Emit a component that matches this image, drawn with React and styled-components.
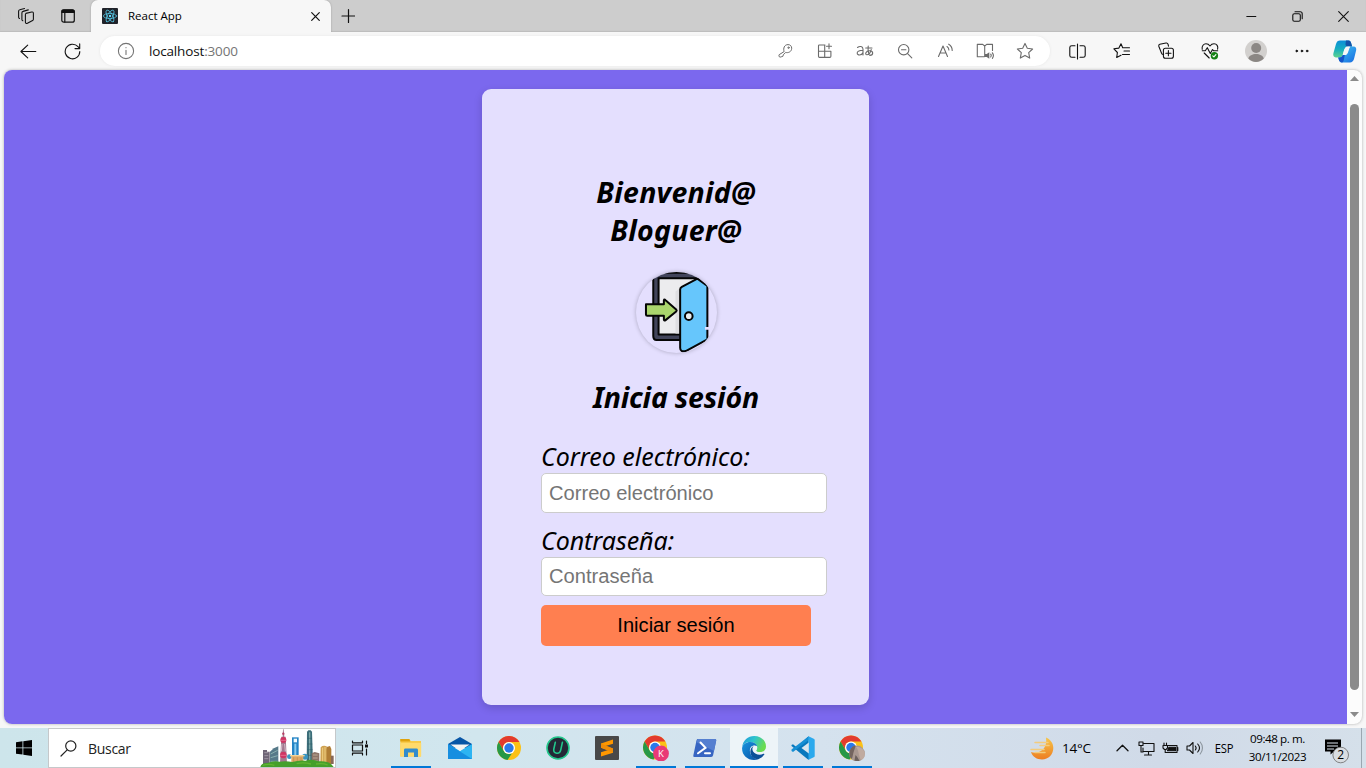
import React from "react";
import styled, { createGlobalStyle } from "styled-components";

const GlobalStyle = createGlobalStyle`
  * { box-sizing: border-box; }
  html, body { margin: 0; padding: 0; overflow: hidden; }
  body { font-family: "Open Sans", "Noto Sans", sans-serif; color: #000; }
  svg { display: block; flex: none; }
`;

const Desktop = styled.div`
  width: 1366px;
  height: 768px;
  display: flex;
  flex-direction: column;
  overflow: hidden;
  background: #f7f7f7;
`;

/* ---------- browser chrome ---------- */
const TitleBar = styled.header`
  height: 32px;
  display: flex;
  background: #cdcdcd;
  box-shadow: inset 0 -1px 1px #bdbdbd;
`;
const TitleTools = styled.div`
  width: 91px;
  display: flex;
  align-items: center;
  padding-left: 17px;
  gap: 25px;
`;
const Tab = styled.div`
  width: 240px;
  height: 32px;
  display: flex;
  align-items: center;
  padding: 0 9px 0 11px;
  background: #f7f7f7;
  border-radius: 7px 7px 0 0;
  box-shadow: 0 0 2px #999;
  clip-path: inset(0 -3px 0 -3px);
`;
const TabTitle = styled.span`
  flex: 1;
  margin-left: 10px;
  font-size: 11.5px;
  line-height: 16px;
`;
const NewTab = styled.div`
  width: 34px;
  display: flex;
  align-items: center;
  justify-content: center;
`;
const WindowButtons = styled.div`
  display: flex;
  margin-left: auto;
`;
const Cell = styled.div`
  width: ${(p) => p.$w}px;
  display: flex;
  align-items: center;
  justify-content: center;
`;
const Toolbar = styled.div`
  height: 38px;
  display: flex;
  background: #f7f7f7;
`;
const NavTools = styled.div`
  width: 100px;
  display: flex;
  padding-left: 6px;
`;
const AddressBar = styled.div`
  width: 950px;
  height: 30px;
  margin-top: 4px;
  display: flex;
  padding: 0 5px 0 17px;
  align-items: center;
  background: #fff;
  border-radius: 15px;
  box-shadow: 0 0 3px #e6e6e6;
`;
const Url = styled.span`
  flex: 1;
  margin-left: 14px;
  font-size: 13.5px;
  letter-spacing: -0.16px;
  color: #101010;
  span { color: #757575; }
`;
const BrowserActions = styled.div`
  display: flex;
  padding-left: 5px;
`;

/* ---------- page ---------- */
const Viewport = styled.main`
  height: 654px;
  margin: 0 4px 4px;
  display: flex;
  border-radius: 8px;
  overflow: hidden;
  background: #fcfcfc;
  box-shadow: 0 0 3px #aaa;
`;
const Page = styled.div`
  width: 1343px;
  padding-top: 19px;
  display: flex;
  justify-content: center;
  align-items: flex-start;
  background: #7b68ee;
`;
const LoginCard = styled.section`
  width: 387px;
  height: 616px;
  padding: 84px 58px 0 59px;
  background: #e4dffe;
  border-radius: 9px;
  box-shadow: 0 3px 9px rgba(0, 0, 0, 0.16);
`;
const Heading = styled.h1`
  margin: 0 0 ${(p) => p.$gap}px;
  font: italic 700 28.5px/38px "Noto Sans", sans-serif;
  letter-spacing: ${(p) => p.$track}px;
  text-align: center;
  white-space: nowrap;
`;
const Avatar = styled.div`
  width: 81px;
  height: 81px;
  margin: 0 auto 25px;
  border-radius: 50%;
  overflow: hidden;
  box-shadow: 0 0 4px rgba(0, 0, 0, 0.25);
`;
const Field = styled.label`
  display: block;
  margin-bottom: ${(p) => p.$gap}px;
`;
const FieldName = styled.span`
  display: block;
  height: 32px;
  font: italic 400 25px/31px "Noto Sans", sans-serif;
  letter-spacing: ${(p) => p.$track}px;
  white-space: nowrap;
`;
const Input = styled.input`
  display: block;
  width: 286px;
  height: ${(p) => p.$h}px;
  padding: 0 7px;
  border: 1px solid #ccc;
  border-radius: 5px;
  background: #fff;
  font: 20.15px "Liberation Sans", sans-serif;
  &::placeholder { color: #757575; opacity: 1; }
`;
const SubmitButton = styled.button`
  display: block;
  width: 270px;
  height: 41px;
  padding: 0;
  border: 0;
  border-radius: 5px;
  background: #ff7f50;
  color: #000;
  font: 20.1px "Liberation Sans", sans-serif;
`;
const Scrollbar = styled.div`
  width: 15px;
  display: flex;
  flex-direction: column;
  align-items: center;
  padding: 6px 0 7px;
  justify-content: space-between;
`;
const Thumb = styled.div`
  width: 9px;
  height: 586px;
  margin-bottom: -1px;
  border-radius: 5px;
  background: #8b8b8b;
`;

/* ---------- taskbar ---------- */
const Taskbar = styled.footer`
  height: 40px;
  display: flex;
  background: linear-gradient(90deg, #cde5eb 0, #d1e6ee 35%, #d5e2ee 60%, #d0dae8 85%, #d5e0ea 100%);
`;
const SearchBox = styled.div`
  width: 288px;
  display: flex;
  align-items: center;
  padding-left: 11px;
  border: 1px solid #c5c8ca;
  background: #fff;
  span { flex: 1; margin-left: 11px; font-size: 14px; letter-spacing: -0.3px; color: #222; }
`;
const Apps = styled.nav`
  display: flex;
  gap: 1px;
  margin-left: 3px;
`;
const AppButton = styled.div`
  width: 48px;
  height: 40px;
  display: flex;
  align-items: center;
  justify-content: center;
  background: ${(p) => (p.$active ? "#edf4f8" : "transparent")};
  background-image: ${(p) => (p.$open || p.$active ? "linear-gradient(#0078d7, #0078d7)" : "none")};
  background-repeat: no-repeat;
  background-position: center bottom;
  background-size: ${(p) => (p.$active ? "48px" : "40px")} 2px;
`;
const Tray = styled.div`
  display: flex;
  align-items: center;
  margin-left: auto;
`;
const Weather = styled.div`
  display: flex;
  align-items: center;
  gap: 8px;
  margin-right: 11px;
  span { width: 37px; font-size: 13.5px; letter-spacing: -0.2px; white-space: nowrap; }
`;
const Language = styled.span`
  width: 32px;
  margin-left: 1px;
  text-align: center;
  font-size: 12.2px;
  letter-spacing: -0.3px;
  transform: scaleX(0.92);
`;
const Clock = styled.div`
  width: 75px;
  text-align: center;
  font-size: 11.6px;
  line-height: 18px;
  letter-spacing: -0.42px;
  white-space: nowrap;
`;
const Notifications = styled.div`
  width: 46px;
  display: flex;
  padding: 7px 0 0 10px;
`;
const DesktopEdge = styled.div`
  width: 5px;
  height: 40px;
  border-left: 1px solid #9ba7b1;
`;

const Ico = ({ w = 20, h = w, c = "#111", sw = 1.1, children }) => (
  <svg width={w} height={h} viewBox={`0 0 ${w} ${h}`} fill="none" stroke={c} strokeWidth={sw} strokeLinecap="round" strokeLinejoin="round">
    {children}
  </svg>
);
const G = "#6b6b6b";

const ReactLogo = () => (
  <Ico w={16} c="#53c1de" sw={0.8}>
    <rect width="16" height="16" rx="1" fill="#20232a" stroke="none" />
    <ellipse cx="8" cy="8" rx="6.6" ry="2.6" />
    <ellipse cx="8" cy="8" rx="6.6" ry="2.6" transform="rotate(60 8 8)" />
    <ellipse cx="8" cy="8" rx="6.6" ry="2.6" transform="rotate(120 8 8)" />
    <circle cx="8" cy="8" r="1.2" fill="#61dafb" stroke="none" />
  </Ico>
);

const AddressIcons = () => (
  <>
    <Cell $w={40}>
      <Ico w={16} c={G} sw={1}>
        <path d="M7 8.2C6 5.5 7.3 1.600 11 1.600c2.200 0 3.700 1.500 3.700 3.600 0 3.600-3.600 5-6 4.200L6.300 11.800l-.4 1.500-1.700.5c-1.400 1-3-.4-2.200-1.800z" />
        <circle cx="11.500" cy="4.700" r=".7" />
      </Ico>
    </Cell>
    <Cell $w={40}>
      <Ico w={16} c={G}>
        <path d="M8 2H2.300C1.600 2 1.500 2.300 1.500 2.800v10.400c0 .8.300 1.200 1 1.200h10.200c.8 0 1.200-.4 1.200-1.200V8.200H1.500M7.700 2v12.400M12 .8v5M9.500 3.300h5" />
      </Ico>
    </Cell>
    <Cell $w={40}>
      <Ico w={18} h={16} c={G}>
        <path d="M1.500 4.500C3.500 2.800 7 3 7 6.300V12M7 7.200C4 7.400 1.200 7.600 1.200 9.900c0 2.900 4.600 2.700 5.800-.4" />
        <path d="M9.700 5h6.300M12.200 3c-.4 3.400-.2 6 .8 8.500M15.200 6.600c-.8 3.300-2.700 5.200-4.300 5.200-2.300 0-1.200-4.100 2.600-4.100 4.200 0 4.200 4.500.3 4.700" />
      </Ico>
    </Cell>
    <Cell $w={40}>
      <Ico w={16} c={G}><circle cx="6.700" cy="6.700" r="5.200" /><path d="M10.600 10.600l4.200 4.200M4.500 6.700h4.400" /></Ico>
    </Cell>
    <Cell $w={40}>
      <Ico w={17} h={16} c={G}>
        <path d="M1.500 13.500L6 3l4.500 10.500M3 10h6M10 3.500c1.200.8 1.900 2 1.900 3.400M11.700 1.200c2.300 1.400 3.500 3.500 3.500 6.200" />
      </Ico>
    </Cell>
    <Cell $w={40}>
      <Ico w={18} h={16} c={G}>
        <path d="M8.200 13.700H1.300V1.400h5.400L8.700 3l2-1.600h5.800v6M8.700 3v10.500" />
        <path d="M9 11v3h1.700l2.600 1.800V9.200L10.700 11z" fill={G} stroke="none" />
        <path d="M14.700 11.200c.6.800.6 2 0 2.800M16.400 9.800c1.100 1.500 1.100 4 0 5.500" />
      </Ico>
    </Cell>
    <Cell $w={40}>
      <Ico w={18} c={G}>
        <path d="M9 1.400l2.300 4.900 5.300.7-3.900 3.700 1 5.400L9 13.400l-4.700 2.700 1-5.400L1.400 7l5.300-.7z" />
      </Ico>
    </Cell>
  </>
);

const Copilot = () => (
  <svg width="24" height="23" viewBox="0 0 24 23">
    <defs>
      <linearGradient id="cpA" x1="0" y1="0" x2="0" y2="1"><stop offset="0" stopColor="#0c8fd8" /><stop offset=".5" stopColor="#16adc0" /><stop offset="1" stopColor="#5ed38e" /></linearGradient>
      <linearGradient id="cpB" x1="0" y1="0" x2="1" y2="1"><stop offset="0" stopColor="#42c9f5" /><stop offset="1" stopColor="#1769e0" /></linearGradient>
    </defs>
    <path d="M7 .6h8.500c1.800 0 2.400 1.500 2.900 3.400l.7 2.400h-4.600c-2 0-2.800 1.600-3.600 4.200L9.700 15c-.6 1.800-1.500 2.400-3.400 2.400H2.800C.5 17.400-.1 15.400.4 13.200L3 4C3.700 1.700 5 .6 7 .6z" fill="url(#cpA)" />
    <path d="M13 .6h2.500c1.800 0 2.400 1.500 2.900 3.400l.7 2.400h-4.600c-1.300 0-2-1-2-2.500z" fill="#1353a8" />
    <path d="M17 22.400H9c-2 0-2.800-1.300-3.300-3.200l-.5-1.800h1.100c1.900 0 2.800-.6 3.400-2.400h2c2.200 0 2.900-1 3.600-3.400l1-3.200c.5-1.600 1.200-2 2.200-2h1.900c2.500 0 3.300 2 2.700 4.200L21 19c-.8 2.300-2 3.400-4 3.400z" fill="url(#cpB)" />
    <path d="M5.200 17.400h1.100c1.900 0 2.800-.6 3.400-2.400h2.100l-1 5c-.4 1.600-.8 2.400-1.800 2.400-2 0-2.800-1.300-3.300-3.200z" fill="#1454c9" />
    <path d="M15.200 6.400c-2.400 0-3.300 1.700-4.100 4.200L9.800 15h1.900c1.500 0 2.200-.9 2.900-3.100l1.100-3.400c.4-1.200.9-1.900 1.900-2.100z" fill="#f7f7f7" />
  </svg>
);

const BrowserActionIcons = () => (
  <>
    <Cell $w={44.5}>
      <Ico w={17}><path d="M6 2.700H2.800c-1.200 0-2 .7-2 1.800v8c0 1.100.8 1.800 2 1.800H6M11 2.700h3.200c1.200 0 2 .7 2 1.800v8c0 1.100-.8 1.800-2 1.800H11M8.500 1v15" /></Ico>
    </Cell>
    <Cell $w={44.5}>
      <Ico w={18}><path d="M9.700 5.700L8 1.800 5.900 6.100l-5 .7 3.500 3.700-.7 5 4.300-2.300M9.700 5.700h6.800M11 9h5.500M9.500 12.500h7" /></Ico>
    </Cell>
    <Cell $w={44}>
      <Ico w={18}>
        <path d="M6.600 12.400h-.5c-.8 0-1.400-.5-1.600-1.300L1.800 4.200c-.3-1 .1-1.700 1-2L9 1c1-.2 1.700.2 2 1.100l.5 2" />
        <rect x="6.400" y="6.200" width="10" height="10" rx="2" /><path d="M11.400 8.600v5.200M8.800 11.200H14" />
      </Ico>
    </Cell>
    <Cell $w={44}>
      <Ico w={18}>
        <path d="M1.200 7.300C.5 3.800 2.800 1.800 5 1.800c1.700 0 2.900.7 4 2.200 1.100-1.500 2.300-2.200 4-2.200 2.800 0 4.400 2.300 3.600 5.400M1.300 8.700h3l2-3 3 5.800 2.200-4 1 1.200h4.200M3.200 11l5 5" />
        <circle cx="13.400" cy="13.700" r="3.700" fill="#168016" stroke="none" /><path d="M11.800 13.900l1.100 1 2-2.300" stroke="#fff" />
      </Ico>
    </Cell>
    <Cell $w={47}>
      <svg width="22" height="22" viewBox="0 0 22 22">
        <circle cx="11" cy="11" r="11" fill="#d2d0ce" /><circle cx="11.200" cy="8" r="5" fill="#8b8784" />
        <path d="M3.300 18.500c1.500-6 14-6 15.500 0C14.500 23 7.500 23 3.300 18.500z" fill="#8b8784" />
      </svg>
    </Cell>
    <Cell $w={46}>
      <Ico w={14} h={4} sw={0.7}><circle cx="1.700" cy="2" r=".9" fill="#111" /><circle cx="6.900" cy="2" r=".9" fill="#111" /><circle cx="12.100" cy="2" r=".9" fill="#111" /></Ico>
    </Cell>
    <Cell $w={39}><Copilot /></Cell>
  </>
);

const DoorPicture = () => (
  <svg width="81" height="81" viewBox="1 1 244 244">
    <g stroke="#050505" strokeWidth="6" strokeLinejoin="round" strokeLinecap="round">
      <path d="M53 3h160v60H150v143H63q-10 0-10-12z" fill="#41445a" />
      <path d="M69 20h118v169H69z" fill="#ececee" />
      <path d="M120 60l13-10v136h-13z" fill="#dedee1" stroke="none" />
      <path d="M134 54q0-5 5-8l47-25 30 22v161l-65 35q-17 4-17-10z" fill="#66c6fc" />
      <circle cx="160" cy="134" r="11.500" fill="#e9edf0" />
      <path d="M31 98h54V86q1-4 5 0l32 28q3 3 0 6l-32 26q-4 3-5-1v-12H35q-4 0-4-4z" fill="#aad56d" />
    </g>
    <path d="M188 4h58v42h-27z" fill="#e4dffe" />
    <path d="M209 167h14v8h-14z" fill="#e4dffe" />
  </svg>
);

const CityPicture = () => (
  <svg width="75" height="38" viewBox="0 0 225 114">
    <path d="M9 63h12v5h8v40H9z" fill="#6e6576" /><path d="M13 71h12M13 80h12M13 89h12" stroke="#b6aeb9" strokeWidth="2" />
    <path d="M30 105V68q10-12 25-16v53z" fill="#567989" /><path d="M32 75l21-11M32 86l21-6M32 97h21" stroke="#93b9b7" strokeWidth="2.500" />
    <path d="M69 1h2l2 22h4l4 80H60l4-80h4z" fill="#a2788f" />
    <circle cx="70" cy="14" r="3.500" fill="#b73b63" /><circle cx="70" cy="33" r="9" fill="#cf3563" /><circle cx="70" cy="78" r="10" fill="#cf3563" />
    <path d="M61 34h18M61 79h18" stroke="#ee84a3" strokeWidth="2" /><path d="M66 45l-2 22M74 45l2 22" stroke="#efe1e8" strokeWidth="2" />
    <path d="M96 25h20v70H96z" fill="#2383c5" /><path d="M101 29h10v11h-10z" fill="#f2faff" /><path d="M106 44v48" stroke="#8acdf2" strokeWidth="6" />
    <path d="M141 8l4-4h7l4 4 3 93h-19z" fill="#3c6e7a" /><path d="M149 10v86" stroke="#7da8a9" strokeWidth="4" />
    <path d="M142 28h14M141 45h16M141 62h17M141 79h17" stroke="#2c5967" strokeWidth="1.500" />
    <path d="M182 55q7-7 18-3l5 50h-24z" fill="#cfa252" /><path d="M188 56v43M195 54v45" stroke="#f4d78a" strokeWidth="2.500" />
    <path d="M155 73l9-4 14 4v33h-23z" fill="#8d7469" /><path d="M159 78h14M159 87h14M159 96h14" stroke="#d5c4a9" strokeWidth="2" />
    <path d="M200 54l10-3 4 9v45h-14z" fill="#b07d35" /><path d="M213 80h8v25h-8z" fill="#886858" />
    <circle cx="88" cy="83" r="7" fill="#3a95c0" /><circle cx="135" cy="83" r="9" fill="#3a95c0" />
    <path d="M94 80h36v25H94z" fill="#dca866" /><path d="M90 80h44" stroke="#f3d59b" strokeWidth="4" /><path d="M101 85v15M112 85v15M123 85v15" stroke="#c58848" strokeWidth="2" />
    <path d="M1 114q3-13 22-12 16-7 35-4 20-3 39 1 18-6 40-4 20-6 38 2 35-3 46 17z" fill="#45a02b" />
    <path d="M8 109q18-6 35 0M110 104q20-5 43 1M168 105q20-3 35 3" stroke="#64b332" strokeWidth="4" fill="none" />
  </svg>
);

const Chrome = ({ badge }) => (
  <svg width={badge ? 26 : 24} height={badge ? 26 : 24} viewBox={badge ? "0 0 26 26" : "0 .5 24 24"}>
    <circle cx="12" cy="12.500" r="12" fill="#fbc116" />
    <path d="M1.600 6.500A12 12 0 0 1 22.400 6.500H12a6 6 0 0 0-5.200 9z" fill="#e33b2e" />
    <path d="M1.600 6.500L6.800 15.500A6 6 0 0 0 12 18.500l3-.8L10.500 24.400A12 12 0 0 1 1.600 6.500z" fill="#279847" />
    <circle cx="12" cy="12.500" r="6" fill="#fff" /><circle cx="12" cy="12.500" r="4.700" fill="#2b79ea" />
    {badge === "k" && (
      <>
        <circle cx="18" cy="18.500" r="7.900" fill="#e93a76" />
        <text x="17.800" y="22" textAnchor="middle" fontSize="9.500" fontFamily="Open Sans" fill="#fff">K</text>
      </>
    )}
    {badge === "photo" && (
      <>
        <circle cx="18" cy="18.500" r="7.900" fill="#a99890" />
        <path d="M10.800 22c-1.500-6 1.500-11 6-11.400l-2 6c-1 3-1 5-2 7.500z" fill="#74655f" />
        <path d="M17 12c3 3 2 8 5 13 3-1 4-4 3.800-7-1-4-4-6.500-8.800-6z" fill="#c0aba0" />
        <path d="M16.500 20c2 2 3 4 4 6-2 .5-4 0-5-.5z" fill="#6c615d" />
      </>
    )}
  </svg>
);

const Explorer = () => (
  <svg width="22" height="20" viewBox="0 0 22 20">
    <path d="M.3 1h9l1.500 2H21v15.500H.3z" fill="#f8cb4b" /><path d="M.3 1h9l1 2.500H.3z" fill="#dfa20e" />
    <path d="M.3 5h20.900v13.500H.3z" fill="#ffda6b" /><path d="M4 12q0-1.400 1.400-1.400h11q1.600 0 1.600 1.400v7h-4v-4.500H8V19H4z" fill="#328ccc" />
  </svg>
);
const Mail = () => (
  <svg width="24" height="24" viewBox="0 0 24 24">
    <path d="M0 8L12 1l12 7v4H0z" fill="#0755a6" />
    <path d="M0 8l12 7L24 8v15H0z" fill="#2db4f2" /><path d="M0 8l24 15H0z" fill="#168ee0" /><path d="M2.400 8.600h19.200L12 15z" fill="#f3f3f3" />
  </svg>
);
const Uninstaller = () => (
  <Ico w={24} c="#22c78b" sw={1.600}>
    <circle cx="12" cy="12" r="11" fill="#242936" /><path d="M9.300 6.300L7.800 13c-.8 4.500 5.600 6.300 6.900 1.100l1.700-7.800" />
  </Ico>
);
const Sublime = () => (
  <svg width="24" height="24" viewBox="0 0 24 24">
    <rect width="24" height="24" rx="1" fill="#484848" />
    <path d="M6 7.500l12-3.900v4.200L10.600 10l7.400 2.400v4.300L6 20.400v-4.100l7.200-2.200L6 11.800z" fill="#ff9800" /><path d="M6 11.800V7.500l12 4.900v4.300z" fill="#ef8c08" />
  </svg>
);
const PowerShell = () => (
  <svg width="24" height="18" viewBox="0 0 24 18">
    <path d="M5 0h17q1.500 0 1.200 1.500l-3.100 14.700Q19.800 18 18.200 18H1.400Q0 18 .3 16.500L3.500 1.400Q3.800 0 5 0z" fill="#3765c2" />
    <path d="M5 0h17q1.500 0 1.200 1.500L21 12 3 3z" fill="#557fd0" />
    <path d="M7.500 3.500l5 5.300L5 14.300M12 14.300h5" fill="none" stroke="#fff" strokeWidth="2" strokeLinecap="round" />
  </svg>
);
const Edge = () => (
  <svg width="24" height="24" viewBox="0 0 24 24">
    <defs>
      <linearGradient id="eg1" x1="0" y1="0" x2="1" y2=".4"><stop offset="0" stopColor="#1f93db" /><stop offset=".5" stopColor="#2dc4ce" /><stop offset="1" stopColor="#6bdc50" /></linearGradient>
      <linearGradient id="eg2" x1="0" y1="0" x2="1" y2="1"><stop offset="0" stopColor="#1694df" /><stop offset="1" stopColor="#0a50a3" /></linearGradient>
    </defs>
    <path d="M.2 11C.8 4.500 6 0 12.200 0 19 0 24 4.800 24 10.400c0 3.500-2.600 5.700-6 5.700-2.400 0-4-.8-3.800-1.800.2-.7 1.100-1.300 1-3C15 8.200 12 6 8.300 6 4.500 6 1.200 8 .2 11z" fill="url(#eg1)" />
    <path d="M.1 12C.5 8.500 4 6 8.300 6c3.600 0 6.200 1.900 6.800 4.200C10 8 7 12 8.100 16.200 9 20 12 23 16.400 23.200 15 23.800 13.500 24 12 24 5 24-.3 18.500.1 12z" fill="url(#eg2)" />
    <path d="M12 9.700c-2.500 1-4.200 4-3.500 7.300C9.200 21 12.500 23.500 16.400 23.200c2.500-1 4.600-2.500 5.900-4.600.4-.7-.1-1.200-.9-.8-3.500 1.800-8.500.8-10.300-2.200-1.200-2.100-.8-4.500.9-5.900z" fill="#0b4f98" />
    <path d="M12.300 9.700c-1.500 1.300-1.900 3.600-.8 5.200 1.200 2 4.200 2.600 6.500 1.800-2.600 0-4.400-1-3.900-2.200.7-.8 1.100-1.600 1-3-.2-1.200-1.300-2-2.800-1.800z" fill="#edf4f8" />
  </svg>
);
const VsCode = () => (
  <svg width="24" height="24" viewBox="0 0 24 24">
    <path d="M17.500.3L5.600 11.200 2 8.300l-1.500.8v1l16.200 13.200 1.400.5z" fill="#0878bd" />
    <path d="M.5 15l1.500.9L17.800 4V.3L.5 13.500z" fill="#168fd4" /><path d="M17.500.2l5.200 2.500c.8.4 1 .8 1 1.600v15.400c0 .8-.2 1.200-1 1.600l-5.200 2.500z" fill="#2ba9ed" />
    <path d="M17.800 6.500v11L10.500 12z" fill="#d9e6ef" />
  </svg>
);

const apps = [
  { id: "explorer", icon: <Explorer />, open: true },
  { id: "mail", icon: <Mail /> },
  { id: "chrome", icon: <Chrome /> },
  { id: "uninstaller", icon: <Uninstaller /> },
  { id: "sublime", icon: <Sublime /> },
  { id: "chrome-k", icon: <Chrome badge="k" />, open: true },
  { id: "powershell", icon: <PowerShell />, open: true },
  { id: "edge", icon: <Edge />, active: true },
  { id: "vscode", icon: <VsCode />, open: true },
  { id: "chrome-photo", icon: <Chrome badge="photo" />, open: true },
];

export default function App() {
  return (
    <Desktop>
      <GlobalStyle />
      <TitleBar>
        <TitleTools>
          <Ico w={18}>
            <path d="M8.900 6.400l5.800-1.400c1-.2 1.600.2 1.700 1.200v6c0 .6-.2 1-.8 1.300l-5.200 2.800c-1.200.5-2 0-2-1.200V7.700c0-.7.100-1.100.5-1.300zM5.800 13.800c-.7-.3-.9-.7-.9-1.300V5.900c0-.8.400-1.300 1.200-1.500l5.200-1.500M2.500 11.500c-.6-.3-.9-.7-.9-1.300V4.300c0-.8.400-1.300 1.200-1.500l4.700-1.300" />
          </Ico>
          <Ico w={16} sw={1.200}>
            <rect x="1.800" y="1.900" width="12.500" height="12.300" rx="2" /><path d="M2 3q0-1 1.300-1h9.500q1.300 0 1.300 1v1.500H2z" fill="#111" /><path d="M4.800 4.500v9.500" />
          </Ico>
        </TitleTools>
        <Tab>
          <ReactLogo />
          <TabTitle>React App</TabTitle>
          <Ico w={13} sw={1.200}><path d="M2.700 2.700l7.600 7.600M10.300 2.700l-7.600 7.600" /></Ico>
        </Tab>
        <NewTab><Ico w={14} sw={1.200}><path d="M7.500.6v13M1 7h13" /></Ico></NewTab>
        <WindowButtons>
          <Cell $w={46}><Ico w={11}><path d="M.8 5.500h9" /></Ico></Cell>
          <Cell $w={46}><Ico w={11}><rect x=".8" y="2.700" width="7.500" height="7.500" rx="1.500" /><path d="M3 .8h5.200c1.200 0 2 .8 2 2v5" /></Ico></Cell>
          <Cell $w={46}><Ico w={11}><path d="M.7.7l9.600 9.600M10.300.7L.7 10.300" /></Ico></Cell>
        </WindowButtons>
      </TitleBar>
      <Toolbar>
        <NavTools>
          <Cell $w={44}><Ico w={17}><path d="M15.800 8.500H1M7.700 2.200L.9 8.500l6.800 6.300" /></Ico></Cell>
          <Cell $w={44}><Ico w={17}><path d="M15.800 8.500A7.300 7.300 0 1 1 14 3.700l1.600 1.700M15.700.9v4.700h-4.700" /></Ico></Cell>
        </NavTools>
        <AddressBar>
          <Ico w={18} c="#757575"><circle cx="9" cy="9" r="7.600" /><path d="M9 8.200v4.300M9 5.500v.2" /></Ico>
          <Url>localhost<span>:3000</span></Url>
          <AddressIcons />
        </AddressBar>
        <BrowserActions><BrowserActionIcons /></BrowserActions>
      </Toolbar>
      <Viewport>
        <Page>
          <LoginCard>
            <Heading $gap={23} $track={0.25}>Bienvenid@<br />Bloguer@</Heading>
            <Avatar><DoorPicture /></Avatar>
            <Heading as="h2" $gap={25} $track={-0.2}>Inicia sesión</Heading>
            <Field $gap={12}>
              <FieldName $track={0.02}>Correo electrónico:</FieldName>
              <Input $h={40} type="email" placeholder="Correo electrónico" />
            </Field>
            <Field $gap={9}>
              <FieldName $track={-0.05}>Contraseña:</FieldName>
              <Input $h={39} type="password" placeholder="Contraseña" />
            </Field>
            <SubmitButton type="button">Iniciar sesión</SubmitButton>
          </LoginCard>
        </Page>
        <Scrollbar>
          <svg width="9" height="5" viewBox="0 0 9 5"><path d="M0 5L4.500 0 9 5z" fill="#8b8b8b" /></svg>
          <Thumb />
          <svg width="9" height="5" viewBox="0 0 9 5"><path d="M0 0h9L4.500 5z" fill="#8b8b8b" /></svg>
        </Scrollbar>
      </Viewport>
      <Taskbar>
        <Cell $w={48}>
          <svg width="16" height="16" viewBox="0 0 16 16"><path d="M0 2.200l6.500-.9v6.200H0zM7.300 1.200L16 0v7.500H7.300zM0 8.300h6.500v6.300L0 13.700zM7.300 8.300H16V16l-8.700-1.300z" fill="#000" /></svg>
        </Cell>
        <SearchBox>
          <Ico w={17} c="#222" sw={1.200}><circle cx="10.800" cy="6" r="5.100" /><path d="M7.200 9.800L1 16" /></Ico>
          <span>Buscar</span>
          <CityPicture />
        </SearchBox>
        <Cell $w={48}>
          <Ico w={18} h={16} sw={1.200}><path d="M1.500 1v1.800h10V1M1.500 15v-1.800h10V15M1.500 5h10v6h-10zM15.500 1v2.500M15.500 9v6" /><path d="M14 4.500h3v3h-3z" fill="#111" stroke="none" /></Ico>
        </Cell>
        <Apps>
          {apps.map((a) => (
            <AppButton key={a.id} $open={a.open} $active={a.active}>{a.icon}</AppButton>
          ))}
        </Apps>
        <Tray>
          <Weather>
            <svg width="24" height="23" viewBox="0 0 24 23">
              <defs><linearGradient id="moon" x2="0" y2="1"><stop stopColor="#f6c64a" /><stop offset="1" stopColor="#ed7d22" /></linearGradient></defs>
              <path d="M16 .5C20.500 2.500 23.300 6 23.300 11c0 6.500-4.800 11.500-11.300 11.500-5 0-9.500-2.700-11-7.500C8 17.500 18 13 16 .5z" fill="url(#moon)" />
              <path d="M5 5.500h13M10 8.500h9M1 12.500h13M5 15.500h10" stroke="#f3cc7d" strokeWidth="1.500" strokeLinecap="round" />
            </svg>
            <span>14°C</span>
          </Weather>
          <Cell $w={24}><Ico w={13} h={8} sw={1.300}><path d="M1 6.800L6.500 1.300 12 6.800" /></Ico></Cell>
          <Cell $w={24}><Ico w={17} h={15}><path d="M6 2.500h10v8H5V7M10.500 10.500V14M6.500 14h7M1 1h4v3.500H1zM3 4.500V11h2" /></Ico></Cell>
          <Cell $w={24}><Ico w={17} h={13}><path d="M6 3.500h9v7H5.500M15.800 5.500v3M2 1v2M4.500 1v2M1 3.500h4.500V6L4 7.500H2.500L1 6zM3.200 7.500v3h2" /><path d="M7 5.300h6.500v3.500H5.500z" fill="#111" /></Ico></Cell>
          <Cell $w={24}><Ico w={17} h={14}><path d="M1 5h2.500L7 1.500v11L3.500 9H1zM9.300 5c1 1.200 1 2.800 0 4M11.700 3c2.200 2.400 2.200 5.600 0 8" /><path d="M14.200 1c3 3.500 3 8.500 0 12" stroke="#8b949c" /></Ico></Cell>
          <Cell $w={1} />
          <Language>ESP</Language>
          <Clock>09:48 p. m.<br />30/11/2023</Clock>
          <Notifications>
            <svg width="25" height="25" viewBox="0 0 25 25">
              <path d="M0 .5h16v12H9l-3.500 3v-3H0z" fill="#000" /><path d="M2 4h11M2 7h11M2 10h7" stroke="#dce4ed" />
              <circle cx="15.700" cy="16" r="7.800" fill="#d9dde1" stroke="#777" strokeWidth=".9" />
              <text x="15.700" y="20.300" textAnchor="middle" fontSize="12" fontFamily="Open Sans" fill="#000">2</text>
            </svg>
          </Notifications>
          <DesktopEdge />
        </Tray>
      </Taskbar>
    </Desktop>
  );
}
